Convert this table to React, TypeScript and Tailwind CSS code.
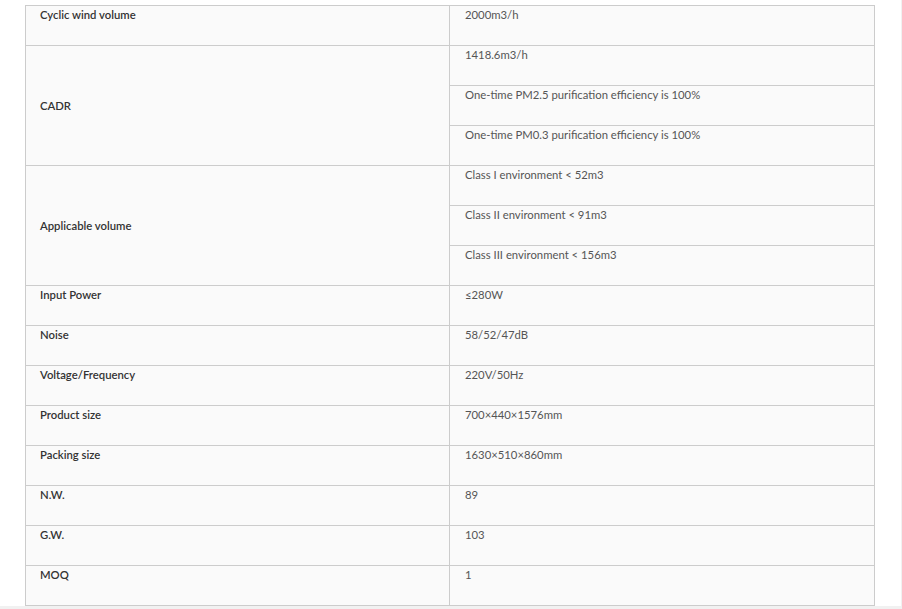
import React from 'react';

interface SpecRow {
  label: string;
  values: string[];
}

const specs: SpecRow[] = [
  { label: 'Cyclic wind volume', values: ['2000m3/h'] },
  {
    label: 'CADR',
    values: [
      '1418.6m3/h',
      'One-time PM2.5 purification efficiency is 100%',
      'One-time PM0.3 purification efficiency is 100%',
    ],
  },
  {
    label: 'Applicable volume',
    values: [
      'Class I environment < 52m3',
      'Class II environment < 91m3',
      'Class III environment < 156m3',
    ],
  },
  { label: 'Input Power', values: ['≤280W'] },
  { label: 'Noise', values: ['58/52/47dB'] },
  { label: 'Voltage/Frequency', values: ['220V/50Hz'] },
  { label: 'Product size', values: ['700×440×1576mm'] },
  { label: 'Packing size', values: ['1630×510×860mm'] },
  { label: 'N.W.', values: ['89'] },
  { label: 'G.W.', values: ['103'] },
  { label: 'MOQ', values: ['1'] },
];

const App: React.FC = () => {
  return (
    <div
      className="w-[902px] h-[609px] bg-[#f1f1f1] overflow-hidden"
      style={{ fontFamily: 'Lato, "Liberation Sans", sans-serif' }}
    >
      <div className="w-[901px] h-[606px] bg-white pt-[5px] pl-[25px]">
        <div className="w-[850px] border-t border-l border-r border-[#cccccc] bg-[#fafafa] text-[11.3px] leading-[17px]">
          {specs.map((row) => {
            const merged = row.values.length > 1;
            return (
              <div key={row.label} className="flex border-b border-[#cccccc]">
                <div
                  className={`w-[424px] shrink-0 border-r border-[#cccccc] pl-[14px] font-semibold text-[#333333] flex ${
                    merged ? 'items-center' : 'items-start'
                  }`}
                >
                  {row.label}
                </div>
                <div className="flex-1 flex flex-col">
                  {row.values.map((v, i) => (
                    <div
                      key={v}
                      className={`h-[39px] pl-[15px] text-[#555555] ${
                        i < row.values.length - 1 ? 'h-[40px] border-b border-[#cccccc]' : ''
                      }`}
                    >
                      {v}
                    </div>
                  ))}
                </div>
              </div>
            );
          })}
        </div>
      </div>
    </div>
  );
};

export default App;
